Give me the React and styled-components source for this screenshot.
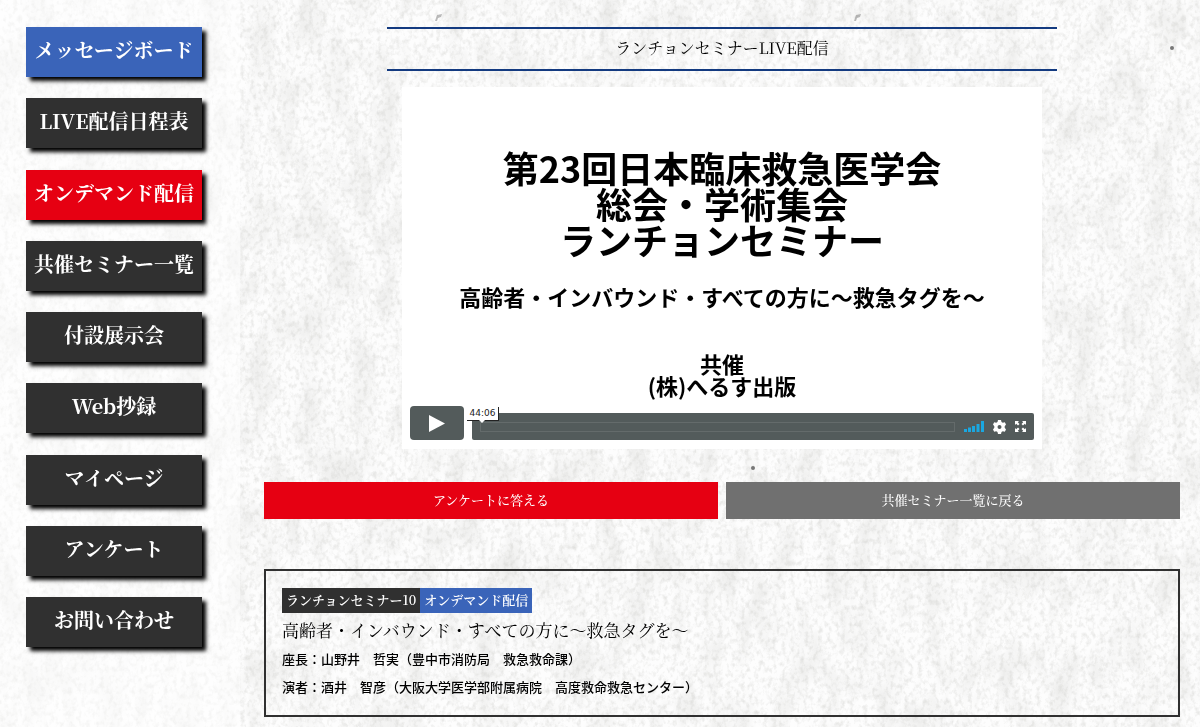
import React from 'react';
import styled, { createGlobalStyle, css } from 'styled-components';


const serif = '"Noto Serif CJK JP", "Liberation Serif", "Noto Sans CJK JP", serif';
const gothic = '"Noto Sans CJK JP", sans-serif';


//Style component
const GlobalStyle = createGlobalStyle`
	*, *::before, *::after {
		box-sizing: border-box;
	}

	body {
		margin: 0;
		background-color: #fdfdfd;
		color: #000;
		font-family: ${serif};
	}

	h1, h2, p, ul {
		margin: 0;
		padding: 0;
	}

	a {
		color: inherit;
		text-decoration: none;
	}
`;

const Paper = styled.svg`
	position: fixed;
	inset: 0;
	width: 100%;
	height: 100%;
	z-index: -1;
`;

const Page = styled.div`
	display: flex;
	min-height: 100vh;
`;

const Sidebar = styled.nav`
	flex: 0 0 240px;
	padding: 27px 38px 80px 26px;
	background-color: rgba(255, 255, 255, 0.5);
`;

const Menu = styled.ul`
	display: flex;
	flex-direction: column;
	justify-content: space-between;
	height: 100%;
	list-style: none;
`;

const menuColors = {
	dark: '#303030',
	blue: '#3a64b9',
	red: '#e60012',
};

const MenuLink = styled.a`
	display: block;
	height: 50px;

	background-color: ${({ $tone }) => menuColors[$tone]};
	box-shadow: 4px 4px 4px #000;

	color: #fff;
	font-size: 20px;
	font-weight: 700;
	line-height: 46px;
	text-align: center;
	white-space: nowrap;
`;

const Main = styled.main`
	flex: 1;
	min-width: 0;
	padding: 27px 20px 10px 24px;
`;

const PageTitle = styled.h1`
	max-width: 670px;
	margin: 0 auto 16px;
	padding-bottom: 2px;

	border-top: 2px solid #133a80;
	border-bottom: 2px solid #133a80;

	font-size: 16px;
	font-weight: 400;
	line-height: 38px;
	text-align: center;
`;

const Player = styled.section`
	display: flex;
	flex-direction: column;
	justify-content: space-between;
	max-width: 640px;
	height: 362px;
	margin: 0 auto 33px;
	padding: 62px 8px 9px;

	background-color: #fff;
`;

const Slide = styled.div`
	font-family: ${gothic};
	font-weight: 700;
	text-align: center;
	white-space: nowrap;
`;

const SlideTitle = styled.h2`
	font-size: 36px;
	line-height: 36px;
`;

const SlideText = styled.p`
	margin-top: ${({ $gap }) => $gap}px;

	font-size: 22px;
	line-height: 22px;
`;

const Controls = styled.div`
	display: flex;
	align-items: flex-end;
	gap: 8px;
`;

const controlReset = css`
	display: flex;
	align-items: center;
	justify-content: center;
	padding: 0;
	border: 0;
	background: none;
	color: #fff;
	cursor: pointer;
`;

const PlayButton = styled.button`
	${controlReset}
	width: 54px;
	height: 34px;
	border-radius: 4px;
	background-color: #535b5b;
`;

const ControlBar = styled.div`
	flex: 1;
	display: flex;
	align-items: center;
	gap: 9px;
	height: 27px;
	padding: 0 8px;

	border-radius: 2px;
	background-color: #535b5b;
`;

const Track = styled.div`
	position: relative;
	flex: 1;
	height: 10px;
	border: 1px solid #646b6b;
`;

const Timecode = styled.span`
	position: absolute;
	left: -14px;
	bottom: 10px;
	width: 32px;

	border-right: 1px solid #222;
	border-bottom: 1px solid #222;
	background-color: #fff;

	color: #222;
	font-family: "DejaVu Sans", sans-serif;
	font-size: 9px;
	line-height: 13px;
	text-align: center;

	&::after {
		content: '';
		position: absolute;
		top: 100%;
		left: 12px;
		border: 3px solid transparent;
		border-top-color: #fff;
	}
`;

const IconButton = styled.button`
	${controlReset}
	height: 20px;
`;

const Actions = styled.div`
	display: grid;
	grid-template-columns: 1fr 1fr;
	gap: 8px;
	margin-bottom: 50px;
`;

const ActionLink = styled.a`
	padding-bottom: 2px;
	background-color: ${({ $primary }) => ($primary ? '#e60012' : '#707070')};

	color: #fff;
	font-size: 13px;
	font-weight: 500;
	line-height: 35px;
	text-align: center;
`;

const Session = styled.section`
	padding: 17px 16px 14px;
	border: 2px solid #303030;
`;

const Tags = styled.div`
	display: flex;
	margin-bottom: 4px;
`;

const Tag = styled.span`
	padding: 0 4px 2px;
	background-color: ${({ $tone }) => menuColors[$tone]};

	color: #fff;
	font-size: 13px;
	font-weight: 600;
	line-height: 23px;
`;

const SessionTitle = styled.h2`
	padding-bottom: 2px;

	font-size: 17px;
	font-weight: 400;
	line-height: 26px;
`;

const Person = styled.p`
	font-family: ${gothic};
	font-size: 13px;
	font-weight: 500;
	line-height: 28px;
`;


const menu = [
	{ label: 'メッセージボード', tone: 'blue' },
	{ label: 'LIVE配信日程表', tone: 'dark' },
	{ label: 'オンデマンド配信', tone: 'red' },
	{ label: '共催セミナー一覧', tone: 'dark' },
	{ label: '付設展示会', tone: 'dark' },
	{ label: 'Web抄録', tone: 'dark' },
	{ label: 'マイページ', tone: 'dark' },
	{ label: 'アンケート', tone: 'dark' },
	{ label: 'お問い合わせ', tone: 'dark' },
];


//Washi paper texture behind the whole page
const PaperTexture = () => (
	<Paper aria-hidden="true">
		<filter id="grain" x="0" y="0" width="100%" height="100%" colorInterpolationFilters="sRGB">
			<feTurbulence type="fractalNoise" baseFrequency="0.22 0.18" numOctaves="3" seed="4" />
			<feColorMatrix values="0 0 0 0 0.72  0 0 0 0 0.72  0 0 0 0 0.7  0.7 0 0 0 -0.31" />
		</filter>
		<filter id="stain" x="0" y="0" width="100%" height="100%" colorInterpolationFilters="sRGB">
			<feTurbulence type="fractalNoise" baseFrequency="0.04 0.02" numOctaves="5" seed="9" />
			<feColorMatrix values="0 0 0 0 0.72  0 0 0 0 0.72  0 0 0 0 0.7  0.5 0 0 0 -0.21" />
		</filter>
		<rect width="100%" height="100%" filter="url(#grain)" />
		<rect width="100%" height="100%" filter="url(#stain)" />
		<g fill="#777">
			<circle cx="1172" cy="48" r="2" />
			<circle cx="753" cy="468" r="2" />
			<path d="M435 21l2-6 5-1-1 3-3 1-1 3zM854 21l2-6 5-1-1 3-3 1-1 3z" opacity="0.5" />
		</g>
	</Paper>
);

const PlayIcon = () => (
	<svg width="16" height="17" viewBox="0 0 16 17" fill="currentColor">
		<path d="M0 0l16 8.500L0 17z" />
	</svg>
);

const VolumeIcon = () => (
	<svg width="20" height="11" viewBox="0 0 20 11" fill="#1aa7e0">
		<path d="M0 8h3v3H0zM4 6.500h3V11H4zM8 5h3v6H8zM12.500 3h3v8h-3zM17 0h3v11h-3z" />
	</svg>
);

const GearIcon = () => (
	<svg width="13" height="14" viewBox="0 0 13 14" fill="currentColor">
		<path
			fillRule="evenodd"
			d="M5 0h3l.5 2 1.300.8 2-.6L13 4.600 11.700 6.200v1.600L13 9.400l-1.200 2.400-2-.6-1.300.8L8 14H5l-.5-2-1.300-.8-2 .6L0 9.400l1.300-1.600V6.200L0 4.600l1.200-2.400 2 .6L4.500 2zM6.500 5a2 2 0 1 0 0 4 2 2 0 0 0 0-4z"
		/>
	</svg>
);

const ExpandIcon = () => (
	<svg width="11" height="11" viewBox="0 0 11 11" fill="currentColor">
		<path d="M0 0h4L2.800 1.200 4.500 3 3 4.500 1.200 2.800 0 4zM11 0v4L9.800 2.800 8 4.500 6.500 3l1.700-1.800L7 0zM0 11V7l1.200 1.200L3 6.500 4.500 8 2.800 9.800 4 11zM11 11H7l1.200-1.200L6.500 8 8 6.500l1.800 1.700L11 7z" />
	</svg>
);


//Main component content
const App = () => {


	//Component render
	return (
		<>
			<GlobalStyle />
			<PaperTexture />
			<Page>
				<Sidebar>
					<Menu>
						{menu.map( item => (
							<li key={item.label} >
								<MenuLink href="#" $tone={item.tone} >{item.label}</MenuLink>
							</li>
						) )}
					</Menu>
				</Sidebar>
				<Main>
					<PageTitle>ランチョンセミナーLIVE配信</PageTitle>
					<Player>
						<Slide>
							<SlideTitle>
								第23回日本臨床救急医学会<br />
								総会・学術集会<br />
								ランチョンセミナー
							</SlideTitle>
							<SlideText $gap={28} >高齢者・インバウンド・すべての方に〜救急タグを〜</SlideText>
							<SlideText $gap={45} >
								共催<br />
								(株)へるす出版
							</SlideText>
						</Slide>
						<Controls>
							<PlayButton aria-label="Play" ><PlayIcon /></PlayButton>
							<ControlBar>
								<Track>
									<Timecode>44:06</Timecode>
								</Track>
								<IconButton aria-label="Volume" ><VolumeIcon /></IconButton>
								<IconButton aria-label="Settings" ><GearIcon /></IconButton>
								<IconButton aria-label="Fullscreen" ><ExpandIcon /></IconButton>
							</ControlBar>
						</Controls>
					</Player>
					<Actions>
						<ActionLink href="#" $primary >アンケートに答える</ActionLink>
						<ActionLink href="#" >共催セミナー一覧に戻る</ActionLink>
					</Actions>
					<Session>
						<Tags>
							<Tag $tone="dark" >ランチョンセミナー10</Tag>
							<Tag $tone="blue" >オンデマンド配信</Tag>
						</Tags>
						<SessionTitle>高齢者・インバウンド・すべての方に〜救急タグを〜</SessionTitle>
						<Person>座長：山野井　哲実（豊中市消防局　救急救命課）</Person>
						<Person>演者：酒井　智彦（大阪大学医学部附属病院　高度救命救急センター）</Person>
					</Session>
				</Main>
			</Page>
		</>
	);
};


export default App; //Export main component
